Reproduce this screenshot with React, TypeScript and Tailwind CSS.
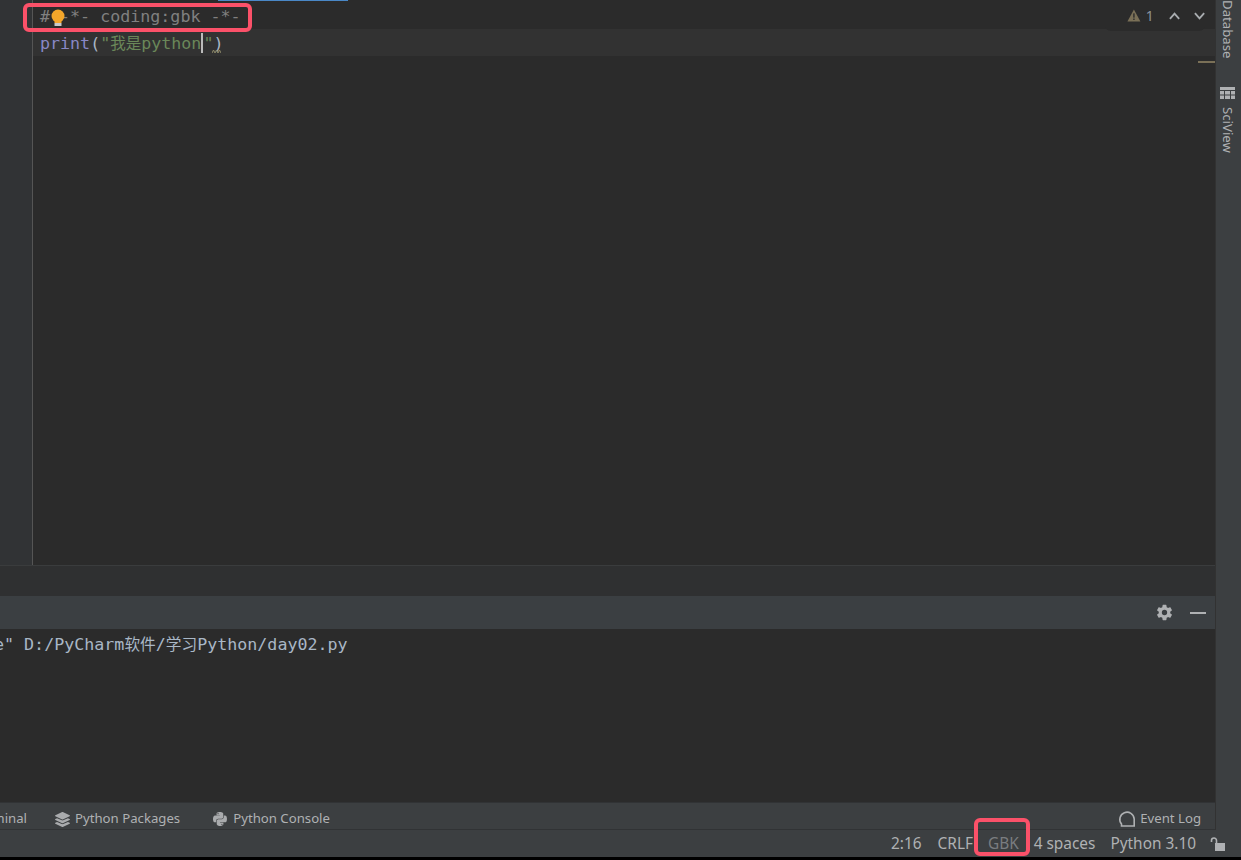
import { FaLayerGroup, FaPython } from "react-icons/fa";
import { IoSettingsSharp } from "react-icons/io5";

const mono = "font-['DejaVu_Sans_Mono','Noto_Sans_CJK_SC',monospace]";
const ui = "font-['Noto_Sans','Noto_Sans_CJK_SC',sans-serif]";

function Marker({ className }: { className: string }) {
  return (
    <div
      className={`absolute border-[4px] border-[#fb5169] rounded-[6px] ${className}`}
    />
  );
}

function Bulb() {
  return (
    <svg
      className="absolute left-[50px] top-[9px]"
      width="16"
      height="18"
      viewBox="0 0 16 18"
    >
      <circle cx="8" cy="7" r="6.5" fill="#f4a62a" />
      <rect x="4.5" y="12" width="7" height="2" fill="#f4a62a" />
      <rect x="4.5" y="14" width="7" height="3" fill="#c9c9c9" />
    </svg>
  );
}

function InspectionWidget() {
  return (
    <div className="absolute right-[10px] top-0 h-[31px] w-[100px] flex items-center bg-[#2b2b2b] rounded-b-md pl-[22px]">
      <svg width="15" height="15" viewBox="0 0 16 15">
        <path d="M8 0.5 L15.5 14.5 H0.5 Z" fill="#7a7057" />
        <rect x="7.2" y="5" width="1.6" height="5" fill="#2b2b2b" />
        <rect x="7.2" y="11" width="1.6" height="1.7" fill="#2b2b2b" />
      </svg>
      <span className={`${ui} ml-[5px] text-[14px] text-[#8d939b]`}>1</span>
      <svg className="ml-[15px]" width="12" height="8" viewBox="0 0 12 8" fill="none">
        <path d="M1 7 L6 1.5 L11 7" stroke="#a9adb0" strokeWidth="2" />
      </svg>
      <svg className="ml-[14px]" width="12" height="8" viewBox="0 0 12 8" fill="none">
        <path d="M1 1 L6 6.5 L11 1" stroke="#a9adb0" strokeWidth="2" />
      </svg>
    </div>
  );
}

function Editor() {
  return (
    <div className="relative h-[565px] flex bg-[#2b2b2b]">
      <div className="w-[33px] shrink-0 bg-[#313335] border-r border-[#555555]" />
      <div className={`${mono} flex-1 pt-[4px] text-[16.67px] leading-[26px]`}>
        <div className="h-[25px] pl-[7px] text-[#808080]"># -*- coding:gbk -*-</div>
        <div className="h-[27px] pl-[7px] leading-[30px] bg-[#323232] text-[#a9b7c6] whitespace-nowrap">
          <span className="text-[#8888c6]">print</span>
          <span className="text-[#a9b7c6]">(</span>
          <span className="text-[#6a8759]">
            "<span className="text-[15.5px]">我是</span>python
          </span>
          <span className="inline-block w-0 h-[20px] align-[-4px] border-l-2 border-[#bbbbbb]" />
          <span className="text-[#6a8759]">"</span>
          <span>)</span>
        </div>
      </div>
      <Bulb />
      <InspectionWidget />
      <div className="absolute right-0 top-[61px] h-[2px] w-[17px] bg-[#7a7057]" />
      <div className="absolute left-[218px] top-0 h-px w-[130px] bg-[#4a88c7]" />
      <svg className="absolute left-[212px] top-[49px]" width="9" height="5" viewBox="0 0 9 5" fill="none">
        <path d="M0 4 L1.5 1 L3 4 L4.5 1 L6 4 L7.5 1 L9 4" stroke="#8f8a6a" strokeWidth="1" />
      </svg>
    </div>
  );
}

function ConsolePanel() {
  return (
    <>
      <div className="h-[31px] bg-[#2f3031] border-t border-[#3a3c3d]" />
      <div className="h-[33px] flex items-center justify-end gap-[17px] pr-[9px] bg-[#3b3f42]">
        <IoSettingsSharp className="text-[#afb1b3]" size={17} />
        <div className="w-[16px] h-[2px] bg-[#afb1b3]" />
      </div>
      <div className={`${mono} h-[173px] bg-[#2b2b2b] pt-[3px] text-[16.67px] leading-[26px] text-[#a9b7c6] whitespace-nowrap overflow-hidden`}>
        <span className="block ml-[-6px]">
          e" D:/PyCharm<span className="text-[15.7px]">软件</span>/<span className="text-[15.7px]">学习</span>Python/day02.py
        </span>
      </div>
    </>
  );
}

function ToolBar() {
  return (
    <div className={`${ui} h-[28px] pt-[6px] pr-[26px] flex items-center bg-[#3c3f41] border-y border-[#313335] text-[13.2px] text-[#afb1b3] whitespace-nowrap overflow-hidden`}>
      <span className="w-[27px] shrink-0 flex justify-end mr-[28px]">Terminal</span>
      <FaLayerGroup className="text-[#a9abad]" size={15} />
      <span className="ml-[5px]">Python Packages</span>
      <FaPython className="ml-[32px] text-[#a9abad]" size={16} />
      <span className="ml-[5px]">Python Console</span>
      <div className="ml-auto flex items-center pr-[14px]">
        <svg width="18" height="18" viewBox="0 0 18 18" fill="none">
          <path d="M3.5 16 H16.2 V9 A7.2 7.2 0 1 0 3.5 14 Z" stroke="#afb1b3" strokeWidth="1.6" />
        </svg>
        <span className="ml-[4px]">Event Log</span>
      </div>
    </div>
  );
}

function StatusBar() {
  return (
    <div className={`${ui} h-[27px] flex items-center justify-end bg-[#3c3f41] text-[15.4px] text-[#afb1b3] whitespace-nowrap`}>
      <span>2:16</span>
      <span className="ml-[16px]">CRLF</span>
      <span className="ml-[15px] text-[#7a7d80]">GBK</span>
      <span className="ml-[15px]">4 spaces</span>
      <span className="ml-[15px]">Python 3.10</span>
      <svg className="ml-[14px] mr-[15px]" width="16" height="14" viewBox="0 0 16 14" fill="none">
        <path d="M1.5 5 V3.5 A2.5 2.5 0 0 1 6.5 3.5 V6.5" stroke="#afb1b3" strokeWidth="1.6" />
        <rect x="5" y="6" width="10" height="8" fill="#afb1b3" />
      </svg>
    </div>
  );
}

function SideBar() {
  return (
    <div className={`${ui} absolute right-0 top-0 w-[26px] h-[830px] flex flex-col items-center pr-[3px] bg-[#3c3f41] border-l border-[#323232] text-[13.2px] text-[#afb1b3]`}>
      <span className="[writing-mode:vertical-rl] leading-none">Database</span>
      <svg className="mt-[29px]" width="15" height="12" viewBox="0 0 15 12" fill="#afb1b3">
        <rect x="0" y="0" width="15" height="3" />
        <rect x="0" y="4" width="4" height="3.5" />
        <rect x="5" y="4" width="5" height="3.5" />
        <rect x="11" y="4" width="4" height="3.5" />
        <rect x="0" y="8.5" width="4" height="3.5" />
        <rect x="5" y="8.5" width="5" height="3.5" />
        <rect x="11" y="8.5" width="4" height="3.5" />
      </svg>
      <span className="[writing-mode:vertical-rl] leading-none mt-[8px]">SciView</span>
    </div>
  );
}

export default function App() {
  return (
    <div className="relative w-[1241px] h-[860px] overflow-hidden bg-black">
      <div className="pr-[26px]">
        <Editor />
        <ConsolePanel />
      </div>
      <ToolBar />
      <StatusBar />
      <SideBar />
      <Marker className="left-[23px] top-[3px] w-[229px] h-[29px]" />
      <Marker className="left-[974px] top-[818px] w-[56px] h-[38px]" />
    </div>
  );
}
